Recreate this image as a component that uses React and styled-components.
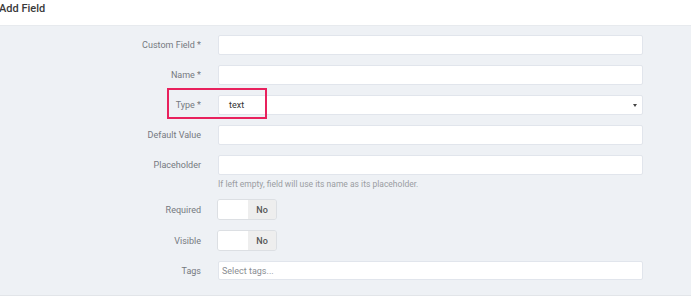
import styled, { createGlobalStyle } from 'styled-components';

const GlobalStyle = createGlobalStyle`
  html, body {
    margin: 0;
    padding: 0;
    background: #ffffff;
    font-family: Roboto, "Liberation Sans", sans-serif;
  }
`;

const rows = [
  { label: 'Custom Field *', kind: 'input' },
  { label: 'Name *', kind: 'input' },
  { label: 'Type *', kind: 'select', value: 'text', highlight: true },
  { label: 'Default Value', kind: 'input' },
  { label: 'Placeholder', kind: 'input', help: 'If left empty, field will use its name as its placeholder.' },
  { label: 'Required', kind: 'toggle' },
  { label: 'Visible', kind: 'toggle' },
  { label: 'Tags', kind: 'tags' }
];

function Control ({ row }) {
  if (row.kind === 'toggle') {
    return (
      <Toggle>
        <ToggleKnob />
        <ToggleState>No</ToggleState>
      </Toggle>
    );
  }
  if (row.kind === 'select') {
    return (
      <Input>
        <InputText>{row.value}</InputText>
        <Caret />
      </Input>
    );
  }
  if (row.kind === 'tags') {
    return (
      <Input $short>
        <Placeholder>Select tags...</Placeholder>
      </Input>
    );
  }
  return <Input />;
}

function App () {
  return (
    <Page>
      <GlobalStyle />
      <Header>Add Field</Header>
      <Panel>
        {
          rows.map((row) => {
            return (
              <Row key={row.label}>
                <Label>{row.label}</Label>
                <Control row={row} />
                {row.help && <Help>{row.help}</Help>}
                {row.highlight && <Highlight />}
              </Row>
            );
          })
        }
      </Panel>
    </Page>
  );
}

export default App;

const Page = styled.div`
  width: 691px;
  height: 301px;
  overflow: hidden;
  background: #ffffff;
`;

const Header = styled.div`
  height: 25px;
  padding: 3px 0 0 0;
  margin-left: -1px;
  box-sizing: border-box;
  font-size: 11px;
  line-height: 12px;
  font-weight: 500;
  color: #3a3a3a;
`;

const Panel = styled.div`
  height: 271px;
  box-sizing: border-box;
  padding: 9px 0 0 0;
  background: #eef1f5;
  border-top: 1px solid #e7eaee;
  border-bottom: 1px solid #e2e5e9;
  display: flex;
  flex-direction: column;
  gap: 10px;
`;

const Row = styled.div`
  position: relative;
  display: grid;
  grid-template-columns: 201px 425px;
  column-gap: 17px;
  align-items: center;
`;

const Label = styled.div`
  text-align: right;
  font-size: 9px;
  color: #75797f;
  white-space: nowrap;
`;

const Input = styled.div`
  height: ${(p) => (p.$short ? '19px' : '20px')};
  box-sizing: border-box;
  background: #ffffff;
  border: 1px solid #e1e5ec;
  border-radius: 2px;
  display: flex;
  align-items: center;
  justify-content: space-between;
  padding: 0 5px 0 3px;
`;

const InputText = styled.span`
  font-size: 9px;
  color: #333333;
  padding-left: 7px;
`;

const Placeholder = styled.span`
  font-size: 9px;
  color: #8a8d92;
`;

const Caret = styled.span`
  width: 0;
  height: 0;
  border-left: 2.5px solid transparent;
  border-right: 2.5px solid transparent;
  border-top: 3.5px solid #444444;
  margin-top: 1px;
`;

const Help = styled.div`
  grid-column: 2;
  margin-top: 4px;
  font-size: 8.5px;
  color: #9a9da2;
`;

const Toggle = styled.div`
  width: 60px;
  height: 21px;
  box-sizing: border-box;
  display: flex;
  border: 1px solid #dcdfe3;
  border-radius: 3px;
  overflow: hidden;
  margin-left: -1px;
`;

const ToggleKnob = styled.div`
  width: 30px;
  background: #ffffff;
`;

const ToggleState = styled.div`
  flex: 1;
  background: #eeeeee;
  display: flex;
  align-items: center;
  justify-content: center;
  font-size: 9px;
  font-weight: 500;
  color: #555555;
`;

const Highlight = styled.div`
  position: absolute;
  left: 167px;
  top: -7px;
  width: 100px;
  height: 31px;
  box-sizing: border-box;
  border: 2px solid #e8215d;
  pointer-events: none;
`;
